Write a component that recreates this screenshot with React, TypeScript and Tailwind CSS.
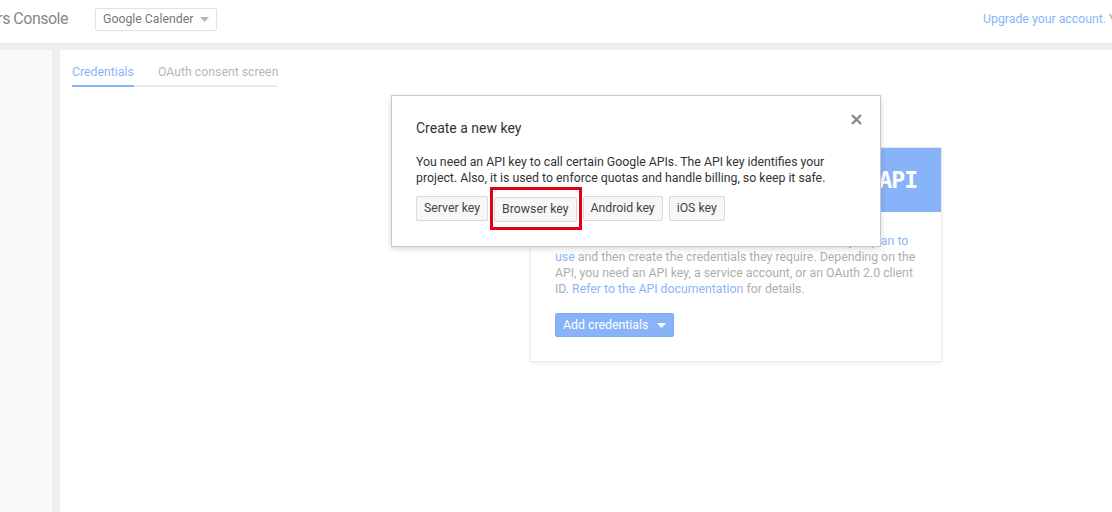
import React from "react";

const font = { fontFamily: "Roboto, 'Liberation Sans', Arial, sans-serif" };

function Caret({ className }: { className?: string }) {
  return (
    <svg width="9" height="5" viewBox="0 0 9 5" className={className}>
      <path d="M0 0h9L4.5 5z" fill="currentColor" />
    </svg>
  );
}

function KeyButton({ children }: { children: React.ReactNode }) {
  return (
    <button className="h-[25px] px-[7px] border border-[#d9d9d9] bg-[#f7f7f7] rounded-[2px] text-[12.3px] leading-none text-[#444] whitespace-nowrap">
      {children}
    </button>
  );
}

export default function App() {
  return (
    <div
      className="relative w-[1112px] h-[512px] overflow-hidden bg-[#e6e6e6] flex flex-col"
      style={font}
    >
      {/* Header */}
      <header className="h-[43px] shrink-0 bg-white flex items-start pt-[8px] shadow-[0_1px_2px_rgba(0,0,0,0.08)]">
        <div className="w-[69px] h-[22px] overflow-hidden flex items-center justify-end pr-[1px]">
          <span className="whitespace-nowrap text-[16px] text-[#3a3a3a] tracking-[-0.5px]">
            Google Developers Console
          </span>
        </div>
        <div className="ml-[26px] h-[23px] w-[122px] border border-[#cfcfcf] rounded-[2px] flex items-center pl-[7px] pr-[7px] justify-between">
          <span className="text-[12.3px] text-[#222]">Google Calender</span>
          <Caret className="text-[#888]" />
        </div>
        <div className="flex-1" />
        <div className="w-[129px] h-[22px] flex items-center overflow-hidden whitespace-nowrap text-[12.3px]">
          <a className="text-[#4285f4]">Upgrade your account.</a>
          <span className="text-[#7a5a10]">&nbsp;Your free trial has ended.</span>
        </div>
      </header>

      {/* Body */}
      <div className="flex-1 flex pt-[7px] gap-[8px]">
        <aside className="w-[52px] bg-[#f6f6f6]" />
        <main className="flex-1 bg-white pl-[12px] pt-[14px]">
          <div className="flex w-[205px] border-b-2 border-[#dadada] text-[12.3px] leading-[16px] whitespace-nowrap">
            <div className="flex-none pb-[5px] -mb-[2px] border-b-2 border-[#4285f4] text-[#4285f4]">
              Credentials
            </div>
            <div className="flex-none ml-[24px] pb-[5px] text-[#8a8a8a]">OAuth consent screen</div>
          </div>

          {/* Card */}
          <div className="mt-[60px] ml-[458px] w-[412px] bg-white border border-[#dedede] shadow-[0_1px_3px_rgba(0,0,0,0.12)]">
            <div className="h-[64px] bg-[#4285f4] flex items-center justify-end pr-[24px]">
              <span
                className="text-white text-[23px] font-bold tracking-[-1px]"
                style={{ fontFamily: "'DejaVu Sans Mono', monospace" }}
              >
                API
              </span>
            </div>
            <div className="px-[24px] pt-[21px] pb-[24px]">
              <p className="text-[12.3px] leading-[16px] text-[#7a7a7a]">
                You need credentials to access APIs.{" "}
                <a className="text-[#4285f4]">Enable the APIs you plan to use</a> and then
                create the credentials they require. Depending on the API, you need an API
                key, a service account, or an OAuth 2.0 client ID.{" "}
                <a className="text-[#4285f4]">Refer to the API documentation</a> for details.
              </p>
              <button className="mt-[16px] h-[24px] px-[7px] bg-[#4285f4] border border-[#3574e0] rounded-[2px] flex items-center gap-[9px] text-white text-[12.3px]">
                Add credentials
                <Caret className="text-white" />
              </button>
            </div>
          </div>
        </main>
      </div>

      {/* Modal overlay */}
      <div className="absolute inset-0 bg-white/[0.38]" />

      {/* Dialog */}
      <div className="absolute left-[391px] top-[95px] w-[490px] h-[152px] bg-white border border-[#c8c8c8] shadow-[0_2px_6px_rgba(0,0,0,0.15)] pl-[24px] pr-[24px] pt-[22px]">
        <button className="absolute top-[18px] right-[18px] text-[#8a8a8a]">
          <svg width="11" height="11" viewBox="0 0 11 11">
            <path d="M1 1l9 9M10 1l-9 9" stroke="currentColor" strokeWidth="2.4" />
          </svg>
        </button>
        <h2 className="text-[14px] leading-[20px] text-[#333]">Create a new key</h2>
        <p className="mt-[16px] text-[12.3px] leading-[16px] text-[#333]">
          You need an API key to call certain Google APIs. The API key identifies your
          <br />
          project. Also, it is used to enforce quotas and handle billing, so keep it safe.
        </p>
        <div className="mt-[10px] flex gap-[6px]">
          <KeyButton>Server key</KeyButton>
          <div className="relative">
            <KeyButton>Browser key</KeyButton>
            <div className="absolute -left-[4px] -top-[9px] -right-[5px] -bottom-[8px] border-[3px] border-[#e3000f] pointer-events-none" />
          </div>
          <KeyButton>Android key</KeyButton>
          <KeyButton>iOS key</KeyButton>
        </div>
      </div>
    </div>
  );
}
